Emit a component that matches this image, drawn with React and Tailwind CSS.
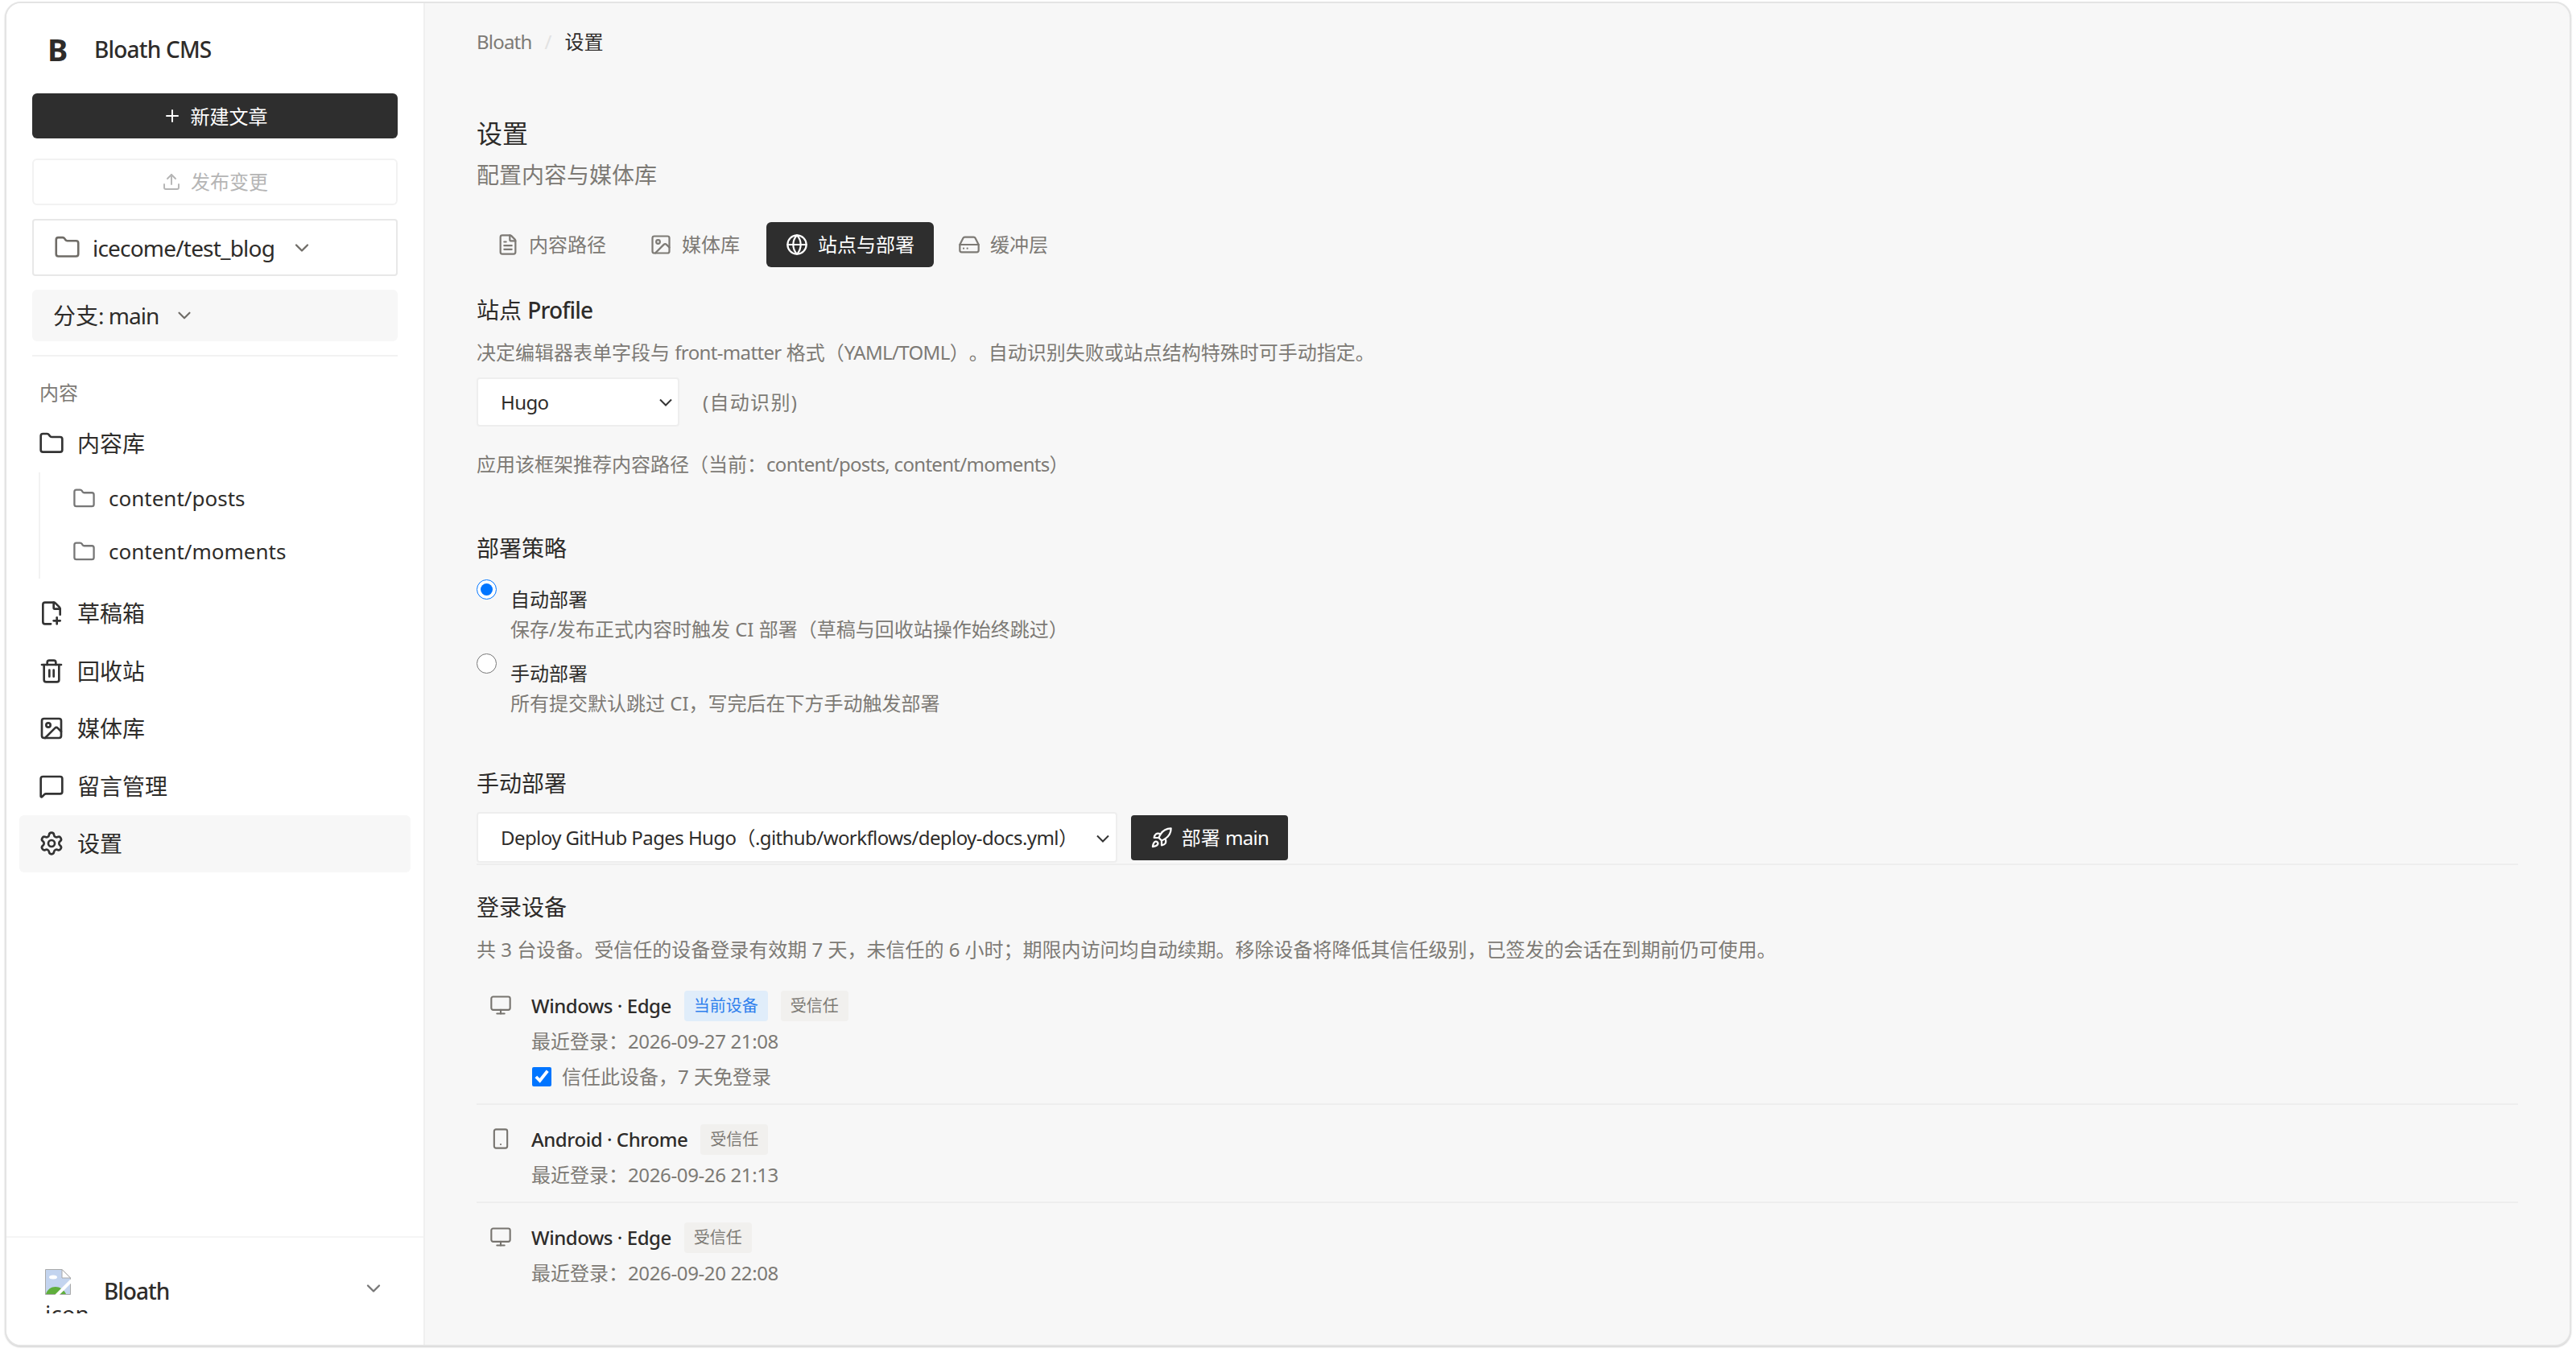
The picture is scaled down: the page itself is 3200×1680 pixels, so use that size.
import React from "react";
import { Plus, Upload, Folder, ChevronDown, FilePlus2, Trash2, Image, MessageSquare, Settings, FileText, Globe, HardDrive, Monitor, Smartphone, Rocket } from "lucide-react";

const L = ({ children }) => <span className="tracking-[-0.65px]">{children}</span>;

const NavItem = ({ icon: Icon, label, active }) => (
  <div className={`mx-[-16px] h-[71.5px] flex items-center gap-[16px] px-[24px] rounded-[6px] text-[28px] text-[#2e2c2a] ${active ? "bg-[#f7f7f7]" : ""}`}>
    <Icon size={32} strokeWidth={2} className="text-[#333333] shrink-0" />
    <span>{label}</span>
  </div>
);

const SubItem = ({ label }) => (
  <div className="h-[66px] flex items-center gap-[16px] pl-[40px]">
    <Folder size={29} strokeWidth={1.9} className="text-[#777777] shrink-0" />
    <span className="text-[26px] text-[#2e2c2a]">{label}</span>
  </div>
);

const Tab = ({ icon: Icon, label, active, w }) => (
  <div className={`h-[56px] flex items-center justify-center gap-[12px] rounded-[6px] text-[24px] ${w} ${active ? "bg-[#2e2e2e] text-white" : "text-[#7d7a75]"}`}>
    <Icon size={28} strokeWidth={1.9} className="shrink-0" />
    <span>{label}</span>
  </div>
);

const Badge = ({ children, blue }) => (
  <span className={`h-[38px] px-[12px] flex items-center rounded-[4px] text-[20px] ${blue ? "bg-[#e0edfa] text-[#2f80ed]" : "bg-[#f1f0ee] text-[#7d7a75]"}`}>{children}</span>
);

const Device = ({ icon: Icon, name, badges, time, trust, last, first }) => (
  <div className={`flex pl-[16px] ${first ? "" : "pt-[24px]"} ${last ? "" : "border-b-2 border-[#eeeeee] pb-[15px]"}`}>
    <Icon size={28} strokeWidth={1.8} className="text-[#77746f] shrink-0 mt-[4px]" />
    <div className="ml-[24px] flex-1">
      <div className="flex items-center gap-[16px] h-[38px]">
        <span className="text-[24px] font-medium tracking-[-0.45px] text-[#2e2c2a]">{name}</span>
        {badges}
      </div>
      <div className="mt-[7px] h-[36px] flex items-center text-[24px] text-[#7d7a75]">
        <span>最近登录：</span>
        <span className="tracking-[-0.37px]">{time}</span>
      </div>
      {trust && (
        <label className="mt-[8px] h-[36px] flex items-center gap-[13px] text-[24px] text-[#7d7a75]">
          <input type="checkbox" defaultChecked className="w-[24px] h-[24px] m-0 ml-[1px] shrink-0" />
          <span>信任此设备，7 天免登录</span>
        </label>
      )}
    </div>
  </div>
);

const Heading = ({ children, className = "" }) => (
  <h3 className={`h-[40px] flex items-center whitespace-pre text-[28px] font-normal text-[#2e2c2a] ${className}`}>{children}</h3>
);

const Line = ({ children, className = "" }) => (
  <p className={`h-[36px] flex items-center whitespace-pre text-[24px] text-[#7d7a75] ${className}`}>{children}</p>
);

const Chevron = ({ className = "" }) => (
  <svg viewBox="0 0 18 10" className={`absolute w-[18px] h-[10px] pointer-events-none ${className}`} fill="none" stroke="#333333" strokeWidth="2">
    <path d="M2 1.5 L9 8.5 L16 1.5" />
  </svg>
);

export default function App() {
  return (
    <div className="w-[3200px] h-[1680px] bg-white pt-[2px] pl-[6px] [text-spacing-trim:space-all] font-['Noto_Sans','Noto_Sans_CJK_SC',sans-serif]">
      <div className="w-[3188px] h-[1671px] flex overflow-hidden rounded-[20px] border-2 border-[#e4e4e4] shadow-[0_1px_2px_rgba(0,0,0,0.2)] bg-[#f7f7f7]">
        <aside className="w-[520px] shrink-0 h-full bg-white border-r-2 border-[#f0f0f0] flex flex-col">
          <div className="px-[32px] flex-1">
            <div className="mt-[29px] h-[56px] flex items-center pl-[19px]">
              <span className="w-[58px] text-[38px] font-bold text-[#2e2c2a]">B</span>
              <span className="text-[28px] font-medium tracking-[-0.8px] text-[#2e2c2a]">Bloath CMS</span>
            </div>
            <button className="mt-[27px] w-full h-[56px] flex items-center justify-center gap-[11px] rounded-[6px] bg-[#2e2e2e] text-[24px] text-white">
              <Plus size={24} strokeWidth={2} />
              <span className="pt-[1px]">新建文章</span>
            </button>
            <button className="mt-[25px] w-full h-[58px] flex items-center justify-center gap-[12px] rounded-[6px] border-2 border-[#f2f2f2] text-[24px] text-[#b5b5b5]">
              <Upload size={24} strokeWidth={1.9} />
              <span>发布变更</span>
            </button>
            <div className="mt-[17px] h-[71px] flex items-center rounded-[4px] border-2 border-[#e8e8e8] pl-[25px]">
              <Folder size={33} strokeWidth={1.9} className="text-[#6f6c67]" />
              <span className="ml-[15px] text-[28px] tracking-[-0.8px] text-[#2e2c2a]">icecome/test_blog</span>
              <ChevronDown size={28} strokeWidth={2} className="ml-[20px] text-[#6f6c67]" />
            </div>
            <div className="mt-[17px] h-[64px] flex items-center rounded-[6px] bg-[#f7f7f7] pl-[26px]">
              <span className="text-[28px] text-[#2e2c2a]">分支<span className="tracking-[-1px]">: main</span></span>
              <ChevronDown size={26} strokeWidth={2} className="ml-[19px] text-[#6f6c67]" />
            </div>
            <div className="mt-[17px] border-t-2 border-[#f2f2f2]" />
            <div className="mt-[27px] h-[36px] flex items-center pl-[9px] text-[24px] text-[#7d7a75]">内容</div>
            <div className="mt-[9px]">
              <NavItem icon={Folder} label="内容库" />
              <div className="ml-[8px] border-l-2 border-[#f2f2f2]">
                <SubItem label="content/posts" />
                <SubItem label="content/moments" />
              </div>
              <div className="mt-[8px]">
                <NavItem icon={FilePlus2} label="草稿箱" />
                <NavItem icon={Trash2} label="回收站" />
                <NavItem icon={Image} label="媒体库" />
                <NavItem icon={MessageSquare} label="留言管理" />
                <NavItem icon={Settings} label="设置" active />
              </div>
            </div>
          </div>
          <div className="h-[135px] border-t-2 border-[#f5f5f5] flex items-start pl-[48px] pr-[48px] pt-[39px]">
            <div className="w-[56px] h-[55px] overflow-hidden shrink-0 text-[28px] leading-[32px] text-[#2e2c2a]">
              <svg viewBox="0 0 32 32" className="w-[32px] h-[32px] block">
                <path d="M0.5 0.5 H21 L31.5 11 V31.5 H0.5 Z" fill="#c3d4ef" stroke="#a9a9a9" />
                <path d="M21 0.5 V11 H31.5 Z" fill="#ffffff" stroke="#a9a9a9" />
                <ellipse cx="10" cy="10" rx="5" ry="2.5" fill="#ffffff" />
                <path d="M1 31 C4 20 20 18 26 31 Z" fill="#5fae3c" />
                <path d="M14 33 L33 14" stroke="#ffffff" strokeWidth="4" />
              </svg>
              <span className="block pt-[7px]">icon</span>
            </div>
            <span className="ml-[17px] mt-[6px] text-[28px] font-medium tracking-[-1px] text-[#2e2c2a]">Bloath</span>
            <ChevronDown size={28} strokeWidth={2} className="ml-auto mt-[10px] text-[#777777]" />
          </div>
        </aside>

        <main className="flex-1 min-w-0 pl-[64px] pr-[64px] pt-[30px]">
          <div className="h-[36px] flex items-center text-[24px]">
            <span className="tracking-[-0.8px] text-[#7d7a75]">Bloath</span>
            <span className="mx-[16px] text-[#e2e2e2]">/</span>
            <span className="text-[#2e2c2a]">设置</span>
          </div>
          <h1 className="mt-[74px] h-[44px] flex items-center text-[32px] font-normal text-[#2e2c2a]">设置</h1>
          <p className="mt-[9px] h-[40px] flex items-center text-[28px] text-[#7d7a75]">配置内容与媒体库</p>
          <div className="mt-[39px] flex items-center">
            <Tab icon={FileText} label="内容路径" w="w-[186px]" />
            <Tab icon={Image} label="媒体库" w="w-[170px] mr-[4px]" />
            <Tab icon={Globe} label="站点与部署" active w="w-[208px]" />
            <Tab icon={HardDrive} label="缓冲层" w="w-[172px]" />
          </div>

          <Heading className="mt-[33px]">站点 <span className="font-medium tracking-[-0.8px]">Profile</span></Heading>
          <Line className="mt-[15px]">决定编辑器表单字段与 <L>front-matter</L> 格式（<L>YAML/TOML</L>）。自动识别失败或站点结构特殊时可手动指定。</Line>
          <div className="mt-[13px] flex items-center">
            <div className="relative">
              <select defaultValue="Hugo" className="w-[252px] h-[61px] appearance-none rounded-[4px] border-2 border-[#eeeeee] bg-white pl-[28px] text-[24px] tracking-[-0.6px] text-[#2e2c2a]">
                <option>Hugo</option>
              </select>
              <Chevron className="right-[8px] top-[26px]" />
            </div>
            <span className="ml-[29px] text-[24px] tracking-[1.3px] text-[#7d7a75]">(自动识别)</span>
          </div>
          <Line className="mt-[29px]">应用该框架推荐内容路径（当前：<span className="tracking-[-0.7px]">content/posts, content/moments</span>）</Line>

          <Heading className="mt-[66px]">部署策略</Heading>
          <div className="mt-[19px] flex items-start">
            <input type="radio" name="deploy" defaultChecked className="w-[25px] h-[25px] m-0 shrink-0" />
            <div className="ml-[17px] pt-[7px]">
              <div className="h-[36px] flex items-center text-[24px] text-[#2e2c2a]">自动部署</div>
              <Line className="mt-[1px]">保存/发布正式内容时触发 CI 部署（草稿与回收站操作始终跳过）</Line>
            </div>
          </div>
          <div className="mt-[12px] flex items-start">
            <input type="radio" name="deploy" className="w-[25px] h-[25px] m-0 shrink-0" />
            <div className="ml-[17px] pt-[7px]">
              <div className="h-[36px] flex items-center text-[24px] text-[#2e2c2a]">手动部署</div>
              <Line className="mt-[1px]">所有提交默认跳过 CI，写完后在下方手动触发部署</Line>
            </div>
          </div>

          <Heading className="mt-[61px]">手动部署</Heading>
          <div className="mt-[16px] flex items-center gap-[17px] border-b-2 border-[#eeeeee] pb-[1px]">
            <div className="relative">
              <select defaultValue="a" className="w-[796px] h-[63px] appearance-none rounded-[4px] border-2 border-[#eeeeee] bg-white pl-[28px] text-[24px] tracking-[-0.58px] text-[#2e2c2a]">
                <option value="a">Deploy GitHub Pages Hugo（.github/workflows/deploy-docs.yml）</option>
              </select>
              <Chevron className="right-[9px] top-[28px]" />
            </div>
            <button className="w-[195px] h-[56px] flex items-center justify-center gap-[11px] rounded-[4px] bg-[#2e2e2e] text-[24px] text-white">
              <Rocket size={28} strokeWidth={1.9} />
              <span>部署 <L>main</L></span>
            </button>
          </div>

          <Heading className="mt-[32px]">登录设备</Heading>
          <Line className="mt-[15px]">共 3 台设备。受信任的设备登录有效期 7 天，未信任的 6 小时；期限内访问均自动续期。移除设备将降低其信任级别，已签发的会话在到期前仍可使用。</Line>

          <div className="mt-[33px]">
            <Device first icon={Monitor} name="Windows · Edge" time="2026-09-27 21:08" trust badges={<><Badge blue>当前设备</Badge><Badge>受信任</Badge></>} />
            <Device icon={Smartphone} name="Android · Chrome" time="2026-09-26 21:13" badges={<Badge>受信任</Badge>} />
            <Device last icon={Monitor} name="Windows · Edge" time="2026-09-20 22:08" badges={<Badge>受信任</Badge>} />
          </div>
        </main>
      </div>
    </div>
  );
}
